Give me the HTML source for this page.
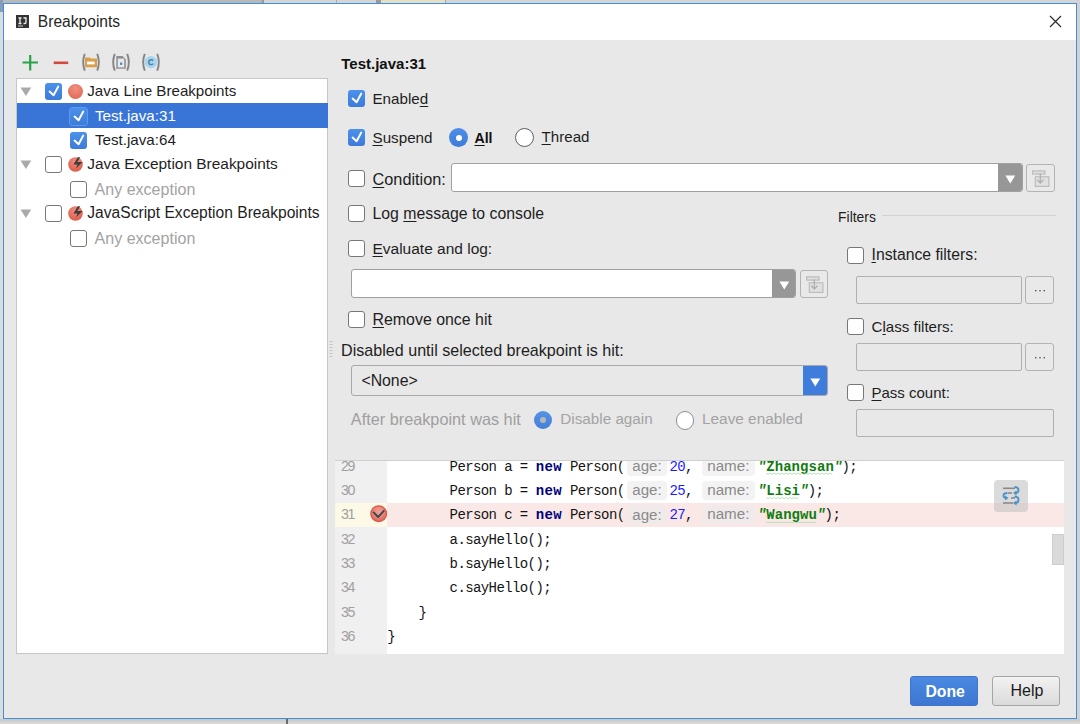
<!DOCTYPE html><html><head><meta charset="utf-8"><style>
*{margin:0;padding:0;box-sizing:border-box}
html,body{width:1080px;height:724px;overflow:hidden;background:#d8d6d3;font-family:"Liberation Sans",sans-serif;position:relative}
.a{position:absolute}
.t{position:absolute;white-space:nowrap;color:#1e1e1e}
.dis{color:#a0a0a0}
.cb{position:absolute;width:17px;height:17px;border:1px solid #777;border-radius:3px;background:#fff}
.cb.on{border:none;background:linear-gradient(#4b91ea,#3e7bd9)}
.cb.on svg{position:absolute;left:0;top:0}
.rd{position:absolute;width:19px;height:19px;border-radius:50%;border:1.3px solid #5e5e5e;background:#fff}
.rd.on{border:none;background:linear-gradient(#4d90e8,#3d7bd8)}
.rd.on:after{content:"";position:absolute;left:6.5px;top:6.5px;width:6px;height:6px;border-radius:50%;background:#fff}
.rd.dison{border:none;background:linear-gradient(#5592e6,#4580d8)}
.rd.dison:after{content:"";position:absolute;left:6.1px;top:6.1px;width:6px;height:6px;border-radius:50%;background:#b8b8b8}
.u{text-decoration:underline;text-decoration-thickness:1px;text-underline-offset:2px}
.fld{position:absolute;border:1px solid #a9a9a9;border-radius:3px;background:#fff}
.fldg{position:absolute;border:1px solid #b0b0b0;border-radius:2px;background:#e8e8e8}
.btn{position:absolute;border:1px solid #b3b3b3;border-radius:3px;background:#e9e9e9}
.code{position:absolute;white-space:pre;font-family:"Liberation Mono",monospace;font-size:14px;line-height:20px;color:#141414;letter-spacing:-0.6px}
.kw{color:#000080;font-weight:bold}
.num{color:#1c1cff}
.str{color:#008000;font-weight:bold}
.hb{position:absolute;background:#efefef;border-radius:4px}
.ht{position:absolute;white-space:nowrap;font-family:"Liberation Sans",sans-serif;color:#8a8a8a}
</style></head><body>
<div class="a" style="left:0;top:0;width:1080px;height:3px;background:#d6d5d3"></div>
<div class="a" style="left:0;top:0;width:262px;height:3px;background:#b9b8b6"></div>
<div class="a" style="left:262px;top:0;width:2px;height:3px;background:#999"></div>
<div class="a" style="left:336px;top:0;width:1px;height:3px;background:#aaa"></div>
<div class="a" style="left:376px;top:0;width:5px;height:3px;background:#9a9a9a"></div>
<div class="a" style="left:381px;top:0;width:64px;height:3px;background:#e6dfc4"></div>
<div class="a" style="left:445px;top:0;width:1px;height:3px;background:#aaa"></div>
<div class="a" style="left:0;top:0;width:3px;height:12px;background:#8a9ab8"></div>
<div class="a" style="left:0;top:12px;width:3px;height:712px;background:#dedcd9"></div>
<div class="a" style="left:1077px;top:0;width:3px;height:724px;background:#d4d2cf"></div>
<div class="a" style="left:0;top:719px;width:1080px;height:5px;background:linear-gradient(#c9c8c6,#dcdbd9)"></div>
<div class="a" style="left:286px;top:719px;width:1.5px;height:5px;background:#6a6a6a"></div>
<div class="a" style="left:3px;top:3px;width:1074px;height:716px;border:1px solid #3c8fe3;background:#e8e8e8"></div>
<div class="a" style="left:4px;top:4px;width:1072px;height:36px;background:#fff"></div>
<svg class="a" style="left:16px;top:15px" width="13" height="13" viewBox="0 0 13 13"><rect width="13" height="13" fill="#333"/><path d="M2.5 3H5.5M4 3V8.5M2.5 8.5H5.5M7.5 3H10V7.5Q10 8.5 9 8.5H7.5" stroke="#eee" stroke-width="1.3" fill="none"/><path d="M2 11H7" stroke="#ccc" stroke-width="1"/></svg>
<div class="t" style="left:37.80px;top:11.59px;font-size:15.6px;line-height:20px;color:#262626;">Breakpoints</div>
<svg class="a" style="left:1049px;top:15px" width="13" height="13" viewBox="0 0 13 13"><path d="M1 1L12 12M12 1L1 12" stroke="#2a2a2a" stroke-width="1.2"/></svg>
<svg class="a" style="left:0;top:40px" width="170" height="40" viewBox="0 40 170 40">
<path d="M22.5 62.5H38M30.2 55V70.5" stroke="#2aa24a" stroke-width="2.2"/>
<path d="M53.7 62.8H68.2" stroke="#d24a3f" stroke-width="2.6"/>
<g fill="none" stroke="#858585" stroke-width="1.9">
<path d="M84.8 53.8Q81.5 62.2 84.8 70.6"/><path d="M97.2 53.8Q100.5 62.2 97.2 70.6"/>
<path d="M114.8 53.8Q111.5 62.2 114.8 70.6"/><path d="M127.2 53.8Q130.5 62.2 127.2 70.6"/>
<path d="M144.8 53.8Q141.5 62.2 144.8 70.6"/><path d="M157.2 53.8Q160.5 62.2 157.2 70.6"/>
</g>
<path d="M85 57.6H90L91 58.6H97V67.2H85Z" fill="#d8a04c"/>
<rect x="87" y="61.6" width="7.6" height="2.8" fill="#fff"/>
<path d="M116.3 56H122.5L125.8 59.3V68.8H116.3Z" fill="#8e8e8e"/>
<rect x="117.8" y="58.6" width="6.4" height="8.8" fill="#e8e8e8"/>
<rect x="120" y="62.5" width="2.2" height="2.4" fill="#3b8fd6"/>
<circle cx="151" cy="62.2" r="6.2" fill="#a5d5f5"/>
<path d="M153.2 60.8Q152.4 59.8 151.2 59.8Q148.8 59.8 148.8 62.2Q148.8 64.6 151.2 64.6Q152.4 64.6 153.2 63.6" fill="none" stroke="#5a7f94" stroke-width="1.4"/>
</svg>
<div class="a" style="left:16px;top:78px;width:312px;height:576px;border:1px solid #c6c6c6;background:#fff"></div>
<div class="a" style="left:17px;top:103.1px;width:311px;height:24.6px;background:#3875d7"></div>
<svg class="a" style="left:20px;top:86.60px" width="12" height="9" viewBox="0 0 12 9"><path d="M0.5 0.5H11.3L5.9 9Z" fill="#a9a9a9"/></svg>
<svg class="a" style="left:20px;top:159.89px" width="12" height="9" viewBox="0 0 12 9"><path d="M0.5 0.5H11.3L5.9 9Z" fill="#a9a9a9"/></svg>
<svg class="a" style="left:20px;top:208.75px" width="12" height="9" viewBox="0 0 12 9"><path d="M0.5 0.5H11.3L5.9 9Z" fill="#a9a9a9"/></svg>
<div class="cb on" style="left:45px;top:82.89999999999999px"><svg width="17" height="17" viewBox="0 0 17 17"><path d="M4.6 8.6L8.6 12.2L13.2 3.6" fill="none" stroke="#fff" stroke-width="2" stroke-linecap="round" stroke-linejoin="round"/></svg></div>
<div class="a" style="left:68px;top:83.60px;width:15px;height:15px;border-radius:50%;background:radial-gradient(circle at 50% 30%,#f0907f,#e0604f)"></div>
<div class="t" style="left:87.30px;top:81.45px;font-size:15.15px;line-height:20px;">Java Line Breakpoints</div>
<div class="cb on" style="left:69.5px;top:107.53px;box-shadow:0 0 0 1px #5b9cf0"><svg width="17" height="17" viewBox="0 0 17 17"><path d="M4.6 8.6L8.6 12.2L13.2 3.6" fill="none" stroke="#fff" stroke-width="2" stroke-linecap="round" stroke-linejoin="round"/></svg></div>
<div class="t" style="left:95.00px;top:105.78px;font-size:15.15px;line-height:20px;color:#fff;">Test.java:31</div>
<div class="cb on" style="left:69.5px;top:131.95999999999998px"><svg width="17" height="17" viewBox="0 0 17 17"><path d="M4.6 8.6L8.6 12.2L13.2 3.6" fill="none" stroke="#fff" stroke-width="2" stroke-linecap="round" stroke-linejoin="round"/></svg></div>
<div class="t" style="left:95.00px;top:130.21px;font-size:15.15px;line-height:20px;">Test.java:64</div>
<div class="cb" style="left:45px;top:156.19px"></div>
<svg class="a" style="left:68px;top:156.89px" width="15" height="15" viewBox="0 0 15 15"><defs><radialGradient id="eg" cx="50%" cy="30%" r="70%"><stop offset="0" stop-color="#f3917f"/><stop offset="1" stop-color="#dc5a4a"/></radialGradient></defs><circle cx="7.5" cy="7.5" r="7.3" fill="url(#eg)"/><path d="M9.8 0.3L12.3 0.3L9.2 5.0L14.6 5.0L7.9 11.6L9.5 7.6L5.4 7.6Z" fill="#3d3d3d"/></svg>
<div class="t" style="left:87.30px;top:154.34px;font-size:15.45px;line-height:20px;">Java Exception Breakpoints</div>
<div class="cb" style="left:69.5px;top:180.82px"></div>
<div class="t" style="left:94.60px;top:178.76px;font-size:16.05px;line-height:20px;color:#a3a3a3;">Any exception</div>
<div class="cb" style="left:45px;top:205.05px"></div>
<svg class="a" style="left:68px;top:205.75px" width="15" height="15" viewBox="0 0 15 15"><defs><radialGradient id="eg" cx="50%" cy="30%" r="70%"><stop offset="0" stop-color="#f3917f"/><stop offset="1" stop-color="#dc5a4a"/></radialGradient></defs><circle cx="7.5" cy="7.5" r="7.3" fill="url(#eg)"/><path d="M9.8 0.3L12.3 0.3L9.2 5.0L14.6 5.0L7.9 11.6L9.5 7.6L5.4 7.6Z" fill="#3d3d3d"/></svg>
<div class="t" style="left:87.30px;top:203.34px;font-size:15.6px;line-height:20px;">JavaScript Exception Breakpoints</div>
<div class="cb" style="left:69.5px;top:229.67999999999998px"></div>
<div class="t" style="left:94.60px;top:227.62px;font-size:16.05px;line-height:20px;color:#a3a3a3;">Any exception</div>
<svg class="a" style="left:329px;top:340px" width="4" height="20" viewBox="0 0 4 20"><g fill="#c4c4c4"><rect x="0.5" y="1" width="3" height="1"/><rect x="0.5" y="4" width="3" height="1"/><rect x="0.5" y="7" width="3" height="1"/><rect x="0.5" y="10" width="3" height="1"/><rect x="0.5" y="13" width="3" height="1"/><rect x="0.5" y="16" width="3" height="1"/></g></svg>
<div class="t" style="left:341.30px;top:54.20px;font-size:15.0px;line-height:20px;font-weight:bold;color:#111;">Test.java:31</div>
<div class="cb on" style="left:347.5px;top:89.5px"><svg width="17" height="17" viewBox="0 0 17 17"><path d="M4.6 8.6L8.6 12.2L13.2 3.6" fill="none" stroke="#fff" stroke-width="2" stroke-linecap="round" stroke-linejoin="round"/></svg></div>
<div class="t" style="left:372.50px;top:88.64px;font-size:15.18px;line-height:20px;">Enable<span class="u">d</span></div>
<div class="cb on" style="left:347.5px;top:128.5px"><svg width="17" height="17" viewBox="0 0 17 17"><path d="M4.6 8.6L8.6 12.2L13.2 3.6" fill="none" stroke="#fff" stroke-width="2" stroke-linecap="round" stroke-linejoin="round"/></svg></div>
<div class="t" style="left:372.50px;top:127.64px;font-size:15.19px;line-height:20px;"><span class="u">S</span>uspend</div>
<div class="rd on" style="left:449px;top:128.4px"></div>
<div class="t" style="left:474.50px;top:127.51px;font-size:14.1px;line-height:20px;font-weight:bold;color:#111;"><span class="u">A</span>ll</div>
<div class="rd" style="left:515px;top:128.4px"></div>
<div class="t" style="left:541.60px;top:127.15px;font-size:15.14px;line-height:20px;"><span class="u">T</span>hread</div>
<div class="cb" style="left:347.5px;top:169.8px"></div>
<div class="t" style="left:372.50px;top:168.55px;font-size:16.3px;line-height:20px;"><span class="u">C</span>ondition:</div>
<div class="a" style="left:450.5px;top:162.9px;width:572.60px;height:29.00px;border:1px solid #a0a0a0;border-radius:3px;background:#fff;overflow:hidden"><div class="a" style="left:546.50px;top:-1px;width:26.10px;height:31.00px;background:#979797"></div></div>
<svg class="a" style="left:1005.25px;top:174.60px" width="11" height="9" viewBox="0 0 11 9"><path d="M0.4 0.6H10.2L5.3 8.4Z" fill="#fff"/></svg>
<div class="btn" style="left:1026.3px;top:164px;width:28.3px;height:28px"></div>
<svg class="a" style="left:1026.3px;top:164px" width="28" height="28" viewBox="0 0 28 28"><g stroke="#b9b9b9" stroke-width="1.1"><rect x="6.6" y="6.9" width="12.4" height="3.2" fill="#dedede"/><rect x="9.3" y="12.8" width="13.6" height="9.6" fill="#e0e0e0"/><path d="M14.3 9.5V19M11.2 15.8L14.3 19L17.4 15.8" fill="none" stroke="#b0b0b0" stroke-width="1.3"/></g></svg>
<div class="cb" style="left:347.5px;top:204.7px"></div>
<div class="t" style="left:372.50px;top:203.61px;font-size:15.83px;line-height:20px;">Log <span class="u">m</span>essage to console</div>
<div class="t" style="left:838.10px;top:206.98px;font-size:13.9px;line-height:20px;">Filters</div>
<div class="a" style="left:882px;top:215px;width:174px;height:1px;background:#d2d2d2"></div>
<div class="cb" style="left:347.5px;top:240.0px"></div>
<div class="t" style="left:372.50px;top:239.03px;font-size:15.49px;line-height:20px;"><span class="u">E</span>valuate and log:</div>
<div class="a" style="left:351.3px;top:269.3px;width:445.20px;height:29.00px;border:1px solid #a0a0a0;border-radius:3px;background:#fff;overflow:hidden"><div class="a" style="left:419.50px;top:-1px;width:25.70px;height:31.00px;background:#979797"></div></div>
<svg class="a" style="left:778.85px;top:281.00px" width="11" height="9" viewBox="0 0 11 9"><path d="M0.4 0.6H10.2L5.3 8.4Z" fill="#fff"/></svg>
<div class="btn" style="left:800px;top:270.3px;width:28px;height:28.2px"></div>
<svg class="a" style="left:800px;top:270.3px" width="28" height="28" viewBox="0 0 28 28"><g stroke="#b9b9b9" stroke-width="1.1"><rect x="6.6" y="6.9" width="12.4" height="3.2" fill="#dedede"/><rect x="9.3" y="12.8" width="13.6" height="9.6" fill="#e0e0e0"/><path d="M14.3 9.5V19M11.2 15.8L14.3 19L17.4 15.8" fill="none" stroke="#b0b0b0" stroke-width="1.3"/></g></svg>
<div class="cb" style="left:847px;top:246.5px"></div>
<div class="t" style="left:871.50px;top:245.44px;font-size:15.77px;line-height:20px;"><span class="u">I</span>nstance filters:</div>
<div class="fldg" style="left:855.5px;top:276.2px;width:166.5px;height:28px"></div>
<div class="btn" style="left:1025.4px;top:276.2px;width:28.3px;height:28px"></div>
<svg class="a" style="left:1034.5px;top:290px" width="12" height="3"><g fill="#555"><rect x="0" y="0" width="1.4" height="1.4"/><rect x="4.3" y="0" width="1.4" height="1.4"/><rect x="8.6" y="0" width="1.4" height="1.4"/></g></svg>
<div class="cb" style="left:347.5px;top:310.8px"></div>
<div class="t" style="left:372.50px;top:309.69px;font-size:15.91px;line-height:20px;"><span class="u">R</span>emove once hit</div>
<div class="cb" style="left:847px;top:318.0px"></div>
<div class="t" style="left:871.50px;top:317.16px;font-size:15.12px;line-height:20px;">C<span class="u">l</span>ass filters:</div>
<div class="fldg" style="left:855.5px;top:342.6px;width:166.5px;height:28.1px"></div>
<div class="btn" style="left:1025.4px;top:342.6px;width:28.3px;height:28.1px"></div>
<svg class="a" style="left:1034.5px;top:356.5px" width="12" height="3"><g fill="#555"><rect x="0" y="0" width="1.4" height="1.4"/><rect x="4.3" y="0" width="1.4" height="1.4"/><rect x="8.6" y="0" width="1.4" height="1.4"/></g></svg>
<div class="t" style="left:341.10px;top:339.62px;font-size:16.1px;line-height:20px;">Disabled until selected breakpoint is hit:</div>
<div class="a" style="left:351.3px;top:365.1px;width:476.70px;height:30.60px;border:1px solid #a8a8a8;border-radius:3px;background:#e8e8e8;overflow:hidden"><div class="a" style="left:450.70px;top:-1px;width:26.00px;height:32.60px;background:#3e7ddb"></div></div>
<svg class="a" style="left:810.20px;top:377.60px" width="11" height="9" viewBox="0 0 11 9"><path d="M0.4 0.6H10.2L5.3 8.4Z" fill="#fff"/></svg>
<div class="t" style="left:361.40px;top:371.31px;font-size:15.84px;line-height:20px;">&lt;None&gt;</div>
<div class="cb" style="left:847px;top:384.0px"></div>
<div class="t" style="left:871.50px;top:383.20px;font-size:15.0px;line-height:20px;"><span class="u">P</span>ass count:</div>
<div class="fldg" style="left:855.5px;top:409.2px;width:198.2px;height:27.4px"></div>
<div class="t" style="left:350.80px;top:408.96px;font-size:16.27px;line-height:20px;color:#9f9f9f;">After breakpoint was hit</div>
<div class="rd dison" style="left:534.3px;top:411px;width:18.2px;height:18.2px"></div>
<div class="t" style="left:560.30px;top:409.31px;font-size:15.26px;line-height:20px;color:#a3a3a3;">Disable again</div>
<div class="rd" style="left:675.6px;top:411px;width:18.8px;height:18.8px;border-color:#8f8f8f"></div>
<div class="t" style="left:702.00px;top:409.27px;font-size:15.37px;line-height:20px;color:#a3a3a3;">Leave enabled</div>
<div class="a" style="left:335px;top:460px;width:729px;height:1px;background:#d0d0d0"></div>
<div class="a" style="left:335px;top:461px;width:729px;height:192.5px;background:#fff;overflow:hidden">
<div class="a" style="left:0;top:0;width:52px;height:200px;background:#f0f0f0"></div>
<div class="a" style="left:0;top:41.53px;width:52px;height:24.6px;background:#fcf9e6"></div>
<div class="a" style="left:52px;top:41.53px;width:680px;height:24.6px;background:#f9e8e6"></div>
<div class="ht" style="left:6.00px;top:-5.45px;font-size:14.2px;line-height:20px;color:#a0a0a0;letter-spacing:-1.5px">29</div>
<div class="ht" style="left:6.00px;top:18.88px;font-size:14.2px;line-height:20px;color:#a0a0a0;letter-spacing:-1.5px">30</div>
<div class="ht" style="left:6.00px;top:43.21px;font-size:14.2px;line-height:20px;color:#a0a0a0;letter-spacing:-1.5px">31</div>
<div class="ht" style="left:6.00px;top:67.54px;font-size:14.2px;line-height:20px;color:#a0a0a0;letter-spacing:-1.5px">32</div>
<div class="ht" style="left:6.00px;top:91.87px;font-size:14.2px;line-height:20px;color:#a0a0a0;letter-spacing:-1.5px">33</div>
<div class="ht" style="left:6.00px;top:116.20px;font-size:14.2px;line-height:20px;color:#a0a0a0;letter-spacing:-1.5px">34</div>
<div class="ht" style="left:6.00px;top:140.53px;font-size:14.2px;line-height:20px;color:#a0a0a0;letter-spacing:-1.5px">35</div>
<div class="ht" style="left:6.00px;top:164.86px;font-size:14.2px;line-height:20px;color:#a0a0a0;letter-spacing:-1.5px">36</div>
<div class="code" style="left:52.20px;top:-4.18px;font-size:14px;">        Person a = </div>
<div class="code" style="left:200.70px;top:-4.18px;font-size:14px;letter-spacing:0.4px;color:#000080;font-weight:bold;">new</div>
<div class="code" style="left:227.10px;top:-4.18px;font-size:14px;"> Person(</div>
<div class="hb" style="left:292.20px;top:-4.73px;width:39.4px;height:19.4px;background:#f3f3f3"></div>
<div class="ht" style="left:297.30px;top:-4.16px;font-size:15.1px;">age:</div>
<div class="code" style="left:334.40px;top:-4.18px;font-size:14px;"><span class="num">20</span>,</div>
<div class="hb" style="left:367.10px;top:-4.73px;width:52.5px;height:19.4px;background:#f3f3f3"></div>
<div class="ht" style="left:372.20px;top:-4.20px;font-size:15.2px;">name:</div>
<div class="code" style="left:52.20px;top:20.15px;font-size:14px;">        Person b = </div>
<div class="code" style="left:200.70px;top:20.15px;font-size:14px;letter-spacing:0.4px;color:#000080;font-weight:bold;">new</div>
<div class="code" style="left:227.10px;top:20.15px;font-size:14px;"> Person(</div>
<div class="hb" style="left:292.20px;top:19.60px;width:39.4px;height:19.4px;background:#f3f3f3"></div>
<div class="ht" style="left:297.30px;top:20.17px;font-size:15.1px;">age:</div>
<div class="code" style="left:334.40px;top:20.15px;font-size:14px;"><span class="num">25</span>,</div>
<div class="hb" style="left:367.10px;top:19.60px;width:52.5px;height:19.4px;background:#f3f3f3"></div>
<div class="ht" style="left:372.20px;top:20.13px;font-size:15.2px;">name:</div>
<div class="code" style="left:52.20px;top:44.48px;font-size:14px;">        Person c = </div>
<div class="code" style="left:200.70px;top:44.48px;font-size:14px;letter-spacing:0.4px;color:#000080;font-weight:bold;">new</div>
<div class="code" style="left:227.10px;top:44.48px;font-size:14px;"> Person(</div>
<div class="hb" style="left:292.20px;top:43.93px;width:39.4px;height:19.4px;background:#f1eaea"></div>
<div class="ht" style="left:297.30px;top:44.50px;font-size:15.1px;">age:</div>
<div class="code" style="left:334.40px;top:44.48px;font-size:14px;"><span class="num">27</span>,</div>
<div class="hb" style="left:367.10px;top:43.93px;width:52.5px;height:19.4px;background:#f1eaea"></div>
<div class="ht" style="left:372.20px;top:44.46px;font-size:15.2px;">name:</div>
<div class="code" style="left:422.80px;top:-4.18px;font-size:14px;letter-spacing:0.05px;color:#107c10;font-weight:bold;"><i>&quot;</i>Zhangsan<i>&quot;</i></div>
<div class="code" style="left:506.50px;top:-4.18px;font-size:14px;">);</div>
<svg class="a" style="left:0;top:0;overflow:visible" width="1" height="1"><polyline points="431.2,12.3 433.2,13.3 435.2,12.3 437.2,13.3 439.2,12.3 441.2,13.3 443.2,12.3 445.2,13.3 447.2,12.3 449.2,13.3 451.2,12.3 453.2,13.3 455.2,12.3 457.2,13.3 459.2,12.3 461.2,13.3 463.2,12.3 465.2,13.3 467.2,12.3 469.2,13.3 471.2,12.3 473.2,13.3 475.2,12.3 477.2,13.3 479.2,12.3 481.2,13.3 483.2,12.3 485.2,13.3 487.2,12.3 489.2,13.3 491.2,12.3 493.2,13.3 495.2,12.3 497.2,13.3" fill="none" stroke="#a8d8a8" stroke-width="0.8"/></svg>
<div class="code" style="left:422.80px;top:20.15px;font-size:14px;letter-spacing:0.05px;color:#107c10;font-weight:bold;"><i>&quot;</i>Lisi<i>&quot;</i></div>
<div class="code" style="left:472.70px;top:20.15px;font-size:14px;">);</div>
<svg class="a" style="left:0;top:0;overflow:visible" width="1" height="1"><polyline points="431.2,36.6 433.2,37.6 435.2,36.6 437.2,37.6 439.2,36.6 441.2,37.6 443.2,36.6 445.2,37.6 447.2,36.6 449.2,37.6 451.2,36.6 453.2,37.6 455.2,36.6 457.2,37.6 459.2,36.6 461.2,37.6 463.2,36.6" fill="none" stroke="#a8d8a8" stroke-width="0.8"/></svg>
<div class="code" style="left:422.80px;top:44.48px;font-size:14px;letter-spacing:0.05px;color:#107c10;font-weight:bold;"><i>&quot;</i>Wangwu<i>&quot;</i></div>
<div class="code" style="left:489.60px;top:44.48px;font-size:14px;">);</div>
<svg class="a" style="left:0;top:0;overflow:visible" width="1" height="1"><polyline points="431.2,60.9 433.2,61.9 435.2,60.9 437.2,61.9 439.2,60.9 441.2,61.9 443.2,60.9 445.2,61.9 447.2,60.9 449.2,61.9 451.2,60.9 453.2,61.9 455.2,60.9 457.2,61.9 459.2,60.9 461.2,61.9 463.2,60.9 465.2,61.9 467.2,60.9 469.2,61.9 471.2,60.9 473.2,61.9 475.2,60.9 477.2,61.9 479.2,60.9 481.2,61.9" fill="none" stroke="#a8d8a8" stroke-width="0.8"/></svg>
<div class="code" style="left:52.20px;top:68.81px;font-size:14px;">        a.sayHello();</div>
<div class="code" style="left:52.20px;top:93.14px;font-size:14px;">        b.sayHello();</div>
<div class="code" style="left:52.20px;top:117.47px;font-size:14px;">        c.sayHello();</div>
<div class="code" style="left:52.20px;top:141.80px;font-size:14px;">    }</div>
<div class="code" style="left:52.20px;top:166.13px;font-size:14px;">}</div>
<svg class="a" style="left:35.20px;top:44.30px" width="17.4" height="17.4" viewBox="0 0 17.4 17.4"><defs><radialGradient id="bg" cx="50%" cy="35%" r="65%"><stop offset="0" stop-color="#f0a096"/><stop offset="1" stop-color="#e06a5e"/></radialGradient></defs><circle cx="8.7" cy="8.7" r="8.5" fill="#d9574b"/><circle cx="8.7" cy="8.7" r="7.2" fill="url(#bg)"/><path d="M3.1 6.9L8.1 12.1L14.3 5.4" fill="none" stroke="#f0b0a8" stroke-width="3.4" stroke-opacity="0.5"/><path d="M3.1 6.9L8.1 12.1L14.3 5.4" fill="none" stroke="#454545" stroke-width="2.1"/></svg>
<div class="a" style="left:659.40px;top:19.20px;width:33.4px;height:31.8px;border-radius:4px;background:rgba(195,195,195,0.6)"></div>
<svg class="a" style="left:659.40px;top:19.20px" width="34" height="32" viewBox="0 0 34 32"><g stroke="#8a8a8a" stroke-width="1.6"><path d="M9 8.3H21"/><path d="M14 13H18"/><path d="M17 18H21"/><path d="M9 23H19"/></g><g fill="none" stroke="#4a93c8" stroke-width="1.9"><path d="M20.5 7Q24.5 7 24.5 10Q24.5 13 21.5 13"/><path d="M13.5 13Q9.5 13 9.5 15.5Q9.5 18 12.5 18"/><path d="M20.5 16.5Q24.5 16.5 24.5 19.5Q24.5 23 21.5 23"/></g><g fill="#4a93c8"><path d="M19 13L22.5 10.5V15.5Z"/><path d="M14.5 18L11 15.5V20.5Z"/><path d="M19 23L22.5 20.5V25.5Z"/></g></svg>
<div class="a" style="left:716.70px;top:72.80px;width:12.5px;height:30.8px;background:#dadada;border:1px solid #cdcdcd"></div>
</div>
<div class="a" style="left:910.2px;top:676.2px;width:67.7px;height:29.7px;border-radius:3px;background:linear-gradient(#4a89e2,#3d77d2);border:1px solid #3e74c9"></div>
<div class="t" style="left:925.40px;top:681.53px;font-size:15.8px;line-height:20px;font-weight:bold;color:#fff;">Done</div>
<div class="a" style="left:992.1px;top:676.2px;width:68.2px;height:29.7px;border-radius:3px;background:linear-gradient(#f2f2f2,#dadada);border:1px solid #a6a6a6"></div>
<div class="t" style="left:1010.50px;top:681.46px;font-size:16px;line-height:20px;color:#1a1a1a;">Help</div>
</body></html>
